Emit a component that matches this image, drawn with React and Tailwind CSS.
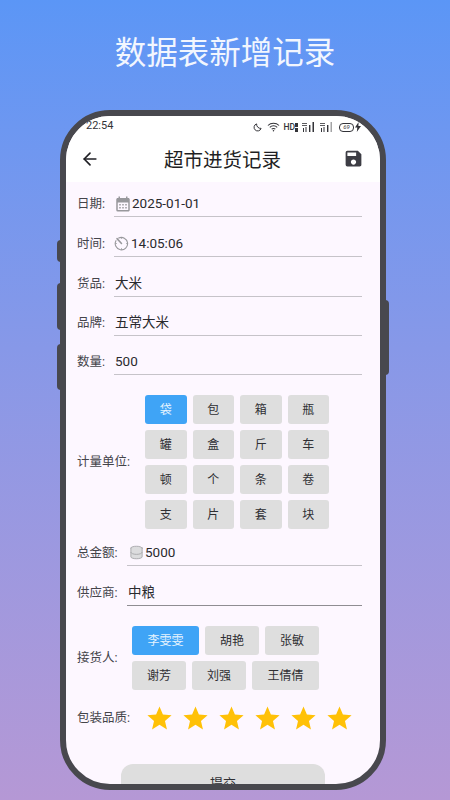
import { ArrowLeft, Database } from "lucide-react";
import { MdSave, MdStar, MdCalendarMonth } from "react-icons/md";

const units = ["袋", "包", "箱", "瓶", "罐", "盒", "斤", "车", "顿", "个", "条", "卷", "支", "片", "套", "块"];
const people = [
  [["李雯雯", "w-[67px]", true], ["胡艳", "w-[54px]"], ["张敏", "w-[54px]"]],
  [["谢芳", "w-[54px]"], ["刘强", "w-[54px]"], ["王倩倩", "w-[67px]"]],
];

const Chip = ({ text, active, className }) => (
  <div
    className={`flex h-[29px] items-center justify-center rounded-[3px] pt-px text-[12px] ${className} ${
      active ? "bg-[#3fa4f6] text-[#e6f3fe]" : "bg-[#dedede] text-[#2f2f33]"
    }`}
  >
    {text}
  </div>
);

const Field = ({ label, value, icon, height, lineClass = "border-[#c6c3c9]", labelWidth = "w-[37px]" }) => (
  <div className={`flex items-end ${height}`}>
    <div className={`${labelWidth} flex h-[32px] shrink-0 items-center pt-[6px] text-[12.5px] text-[#44444a]`}>{label}</div>
    <div className={`flex h-[32px] flex-1 items-center border-b-[1.5px] pt-[6px] ${lineClass} text-[13.5px] text-[#2a2a2e]`}>
      {icon}
      <span className={icon ? "" : "pl-px"}>{value}</span>
    </div>
  </div>
);

const TimerIcon = () => (
  <svg width="15" height="15" viewBox="0 0 16 16" fill="none" stroke="#98989c" strokeWidth="1.2" className="mr-[2px] shrink-0">
    <path d="M5 2.2A6.6 6.6 0 1 1 2.1 5" strokeLinecap="round" />
    <path d="M3.2 2.8 8 8" strokeWidth="1.6" strokeLinecap="round" />
    <path d="M8 1.4v1.6M14.6 8H13M8 14.6V13M1.4 8H3" strokeWidth="0.9" />
  </svg>
);

const StatusIcons = () => (
  <div className="flex items-center gap-[3px] text-[#333338]">
    <svg width="9" height="9" viewBox="0 0 10 10" fill="none" stroke="currentColor" strokeWidth="1.1">
      <path d="M4 1a4 4 0 1 0 5 5 4.6 4.6 0 0 1-5-5z" />
    </svg>
    <svg width="13" height="10" viewBox="0 0 14 10" fill="none" stroke="currentColor" strokeWidth="1.1" className="ml-[2px]">
      <path d="M1 3.4a8.4 8.4 0 0 1 12 0M3 5.4a5.6 5.6 0 0 1 8 0M5 7.4a2.8 2.8 0 0 1 4 0" />
      <circle cx="7" cy="9" r="0.8" fill="currentColor" stroke="none" />
    </svg>
    <span className="text-[8.5px] font-medium leading-none">HD</span>
    <svg width="3" height="9" viewBox="0 0 3 9" fill="currentColor" className="-ml-[3px]">
      <path d="M0 0h3v4H0zM0 5h3v4H0z" />
    </svg>
    {[0, 1].map((i) => (
      <svg key={i} width="14" height="10" viewBox="0 0 14 10" fill="currentColor" className="ml-[1px]">
        <path d="M0 1h5v1H0zM0 3h5v1H0z" opacity="0.8" />
        <path d="M1 6h1v4H1zM3.5 5h1v5h-1zM7 3h1.4v7H7z" />
        <path d="M10.5 0H12v10h-1.5z" opacity={i ? 0.45 : 1} />
      </svg>
    ))}
    <div className="ml-[2px] flex h-[9px] w-[15px] items-center justify-center rounded-[4px] border border-[#333338] text-[6px] italic leading-none">
      69
    </div>
    <svg width="6" height="10" viewBox="0 0 6 10" fill="currentColor" className="-ml-[2px]">
      <path d="M3.6 0 0 5.6h2.3L1.8 10 6 3.9H3.4z" />
    </svg>
  </div>
);

export default function App() {
  return (
    <div
      className="h-[800px] w-[450px] overflow-hidden bg-gradient-to-b from-[#5b96f6] to-[#b598d5]"
      style={{ fontFamily: 'Roboto, "Noto Sans CJK SC", sans-serif' }}
    >
      <h1 className="flex h-[110px] items-center justify-center pb-[3px] text-[31.5px] font-normal text-[#f2f6fe]">
        数据表新增记录
      </h1>

      <div className="relative ml-[60px] h-[680px] w-[326px]">
        <div className="absolute left-[-3px] top-[130px] h-[22px] w-[4px] rounded-l bg-[#48484e]" />
        <div className="absolute left-[-3px] top-[173px] h-[47px] w-[4px] rounded-l bg-[#48484e]" />
        <div className="absolute left-[-3px] top-[234px] h-[46px] w-[4px] rounded-l bg-[#48484e]" />
        <div className="absolute right-[-3px] top-[190px] h-[75px] w-[4px] rounded-r bg-[#48484e]" />

        <div className="relative flex h-full flex-col overflow-hidden rounded-[50px] border-[6px] border-[#48484e] bg-[#fdf7ff]">
          <div className="bg-white">
            <div className="flex h-[16px] items-end justify-between pl-[20px] pr-[19px]">
              <span className="text-[11px] leading-[13px] text-[#333338]">22:54</span>
              <StatusIcons />
            </div>
            <div className="flex h-[50px] items-center justify-between pl-[14px] pr-[16px] pt-[3px]">
              <ArrowLeft size={20} strokeWidth={2} className="text-[#1f1f24]" />
              <span className="pl-[2px] pt-[5px] text-[19.5px] text-[#1f1f24]">超市进货记录</span>
              <MdSave size={21} className="text-[#3d3d44]" />
            </div>
          </div>

          <div className="flex flex-1 flex-col pl-[11px] pr-[18px]">
            <Field label="日期:" value="2025-01-01" height="h-[35px]" icon={<MdCalendarMonth size={18} className="shrink-0 text-[#98989c]" />} />
            <Field label="时间:" value="14:05:06" height="h-[40px]" icon={<TimerIcon />} />
            <Field label="货品:" value="大米" height="h-[40px]" />
            <Field label="品牌:" value="五常大米" height="h-[39px]" />
            <Field label="数量:" value="500" height="h-[39px]" />

            <div className="mt-[20px] flex items-center">
              <div className="w-[68px] shrink-0 text-[12.5px] text-[#44444a]">计量单位:</div>
              <div className="grid w-[184px] grid-cols-4 gap-x-[6px] gap-y-[6px]">
                {units.map((u, i) => (
                  <Chip key={u} text={u} active={i === 0} />
                ))}
              </div>
            </div>

            <Field
              label="总金额:"
              value="5000"
              height="h-[37px]"
              labelWidth="w-[50px]"
              icon={<Database size={15} strokeWidth={1.4} className="ml-[2px] mr-px shrink-0 fill-[#dcdcde] text-[#a5a5a8]" />}
            />
            <Field label="供应商:" value="中粮" height="h-[40px]" labelWidth="w-[50px]" lineClass="border-[#8f8d92]" />

            <div className="mt-[20px] flex items-center">
              <div className="w-[55px] shrink-0 text-[12.5px] text-[#44444a]">接货人:</div>
              <div className="flex flex-col gap-[6px]">
                {people.map((row, r) => (
                  <div key={r} className="flex gap-[6px]">
                    {row.map(([name, w, active]) => (
                      <Chip key={name} text={name} active={active} className={w} />
                    ))}
                  </div>
                ))}
              </div>
            </div>

            <div className="mt-[14px] flex items-center">
              <div className="w-[68px] shrink-0 text-[12.5px] text-[#44444a]">包装品质:</div>
              <div className="flex gap-[7px]">
                {[1, 2, 3, 4, 5, 6].map((n) => (
                  <MdStar key={n} size={29} className="text-[#ffc107]" />
                ))}
              </div>
            </div>

            <div className="ml-[44px] mt-[31px] flex h-[44px] w-[204px] shrink-0 justify-center rounded-[12px] bg-[#dedede] pt-[10px] text-[13px] text-[#2f2f33]">
              提交
            </div>
          </div>
        </div>
      </div>
    </div>
  );
}
